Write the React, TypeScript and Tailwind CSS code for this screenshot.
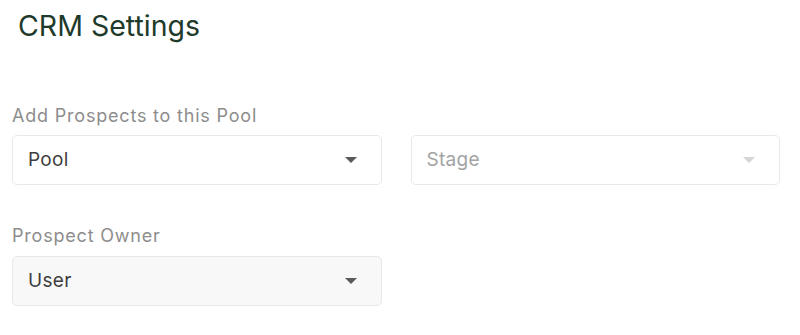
import { ReactNode } from 'react'

function Caret({ muted }: { muted?: boolean }) {
  return (
    <svg width="12" height="6" viewBox="0 0 12 6" className={muted ? 'text-[#d6d6d6]' : 'text-[#5a5a5a]'}>
      <path d="M0 0h12L6 6z" fill="currentColor" />
    </svg>
  )
}

function Select({ value, muted, filled }: { value: ReactNode; muted?: boolean; filled?: boolean }) {
  return (
    <div
      className={`flex h-[50px] items-center justify-between rounded-[5px] border border-[#e8e8e8] pl-[15px] pr-[24px] text-[19px] tracking-[0.3px] ${
        filled ? 'bg-[#f8f8f8]' : 'bg-white'
      } ${muted ? 'text-[#a3a3a3]' : 'text-[#3e3e3e]'}`}
    >
      <span>{value}</span>
      <Caret muted={muted} />
    </div>
  )
}

export default function App() {
  return (
    <div className="h-[335px] w-[800px] bg-white pl-[12px] pr-[20px] font-['Inter',sans-serif]">
      <h1 className="pl-[6px] pt-[8px] text-[28.5px] leading-[36px] text-[#1e3a2b]">CRM Settings</h1>

      <div className="mt-[60px] text-[18px] leading-[24px] tracking-[0.8px] text-[#8d8d8d]">Add Prospects to this Pool</div>
      <div className="mt-[7px] grid grid-cols-2 gap-[29px]">
        <Select value="Pool" />
        <Select value="Stage" muted />
      </div>

      <div className="mt-[39px] text-[18px] leading-[24px] tracking-[0.8px] text-[#8d8d8d]">Prospect Owner</div>
      <div className="mt-[8px] grid grid-cols-2 gap-[29px]">
        <Select value="User" filled />
      </div>
    </div>
  )
}
